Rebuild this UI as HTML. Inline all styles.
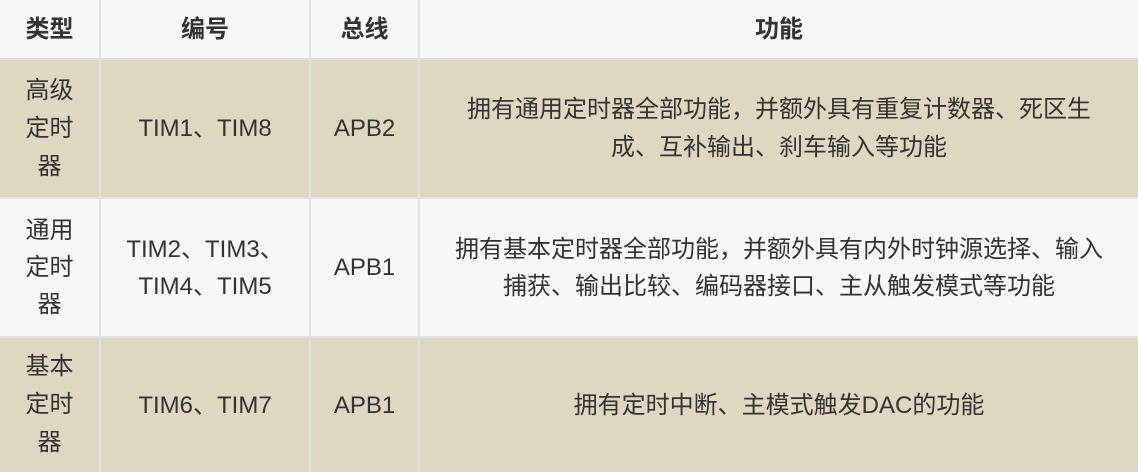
<!DOCTYPE html><html><head><meta charset="utf-8"><style>
body{margin:0;width:1138px;height:472px;background:#dfe2e5;overflow:hidden;font-family:"Liberation Sans","Noto Sans CJK SC",sans-serif;color:#333;font-size:24px}
.c{position:absolute;display:flex;align-items:center;justify-content:center;text-align:center;line-height:37px}
.h{background:#f7f7f8;font-weight:bold}
.w{background:#f7f7f8}
.b{background:#dfd7bf}
</style></head><body>
<div class="c h" style="left:0;top:0;width:99px;height:58px">类型</div>
<div class="c h" style="left:101px;top:0;width:208px;height:58px">编号</div>
<div class="c h" style="left:311px;top:0;width:107px;height:58px">总线</div>
<div class="c h" style="left:420px;top:0;width:718px;height:58px">功能</div>

<div class="c b" style="left:0;top:60px;width:99px;height:137px"><div style="width:50px;line-height:38px">高级定时器</div></div>
<div class="c b" style="left:101px;top:60px;width:208px;height:137px">TIM1、TIM8</div>
<div class="c b" style="left:311px;top:60px;width:107px;height:137px">APB2</div>
<div class="c b" style="left:420px;top:60px;width:718px;height:137px"><div style="width:635px;line-height:38px">拥有通用定时器全部功能，并额外具有重复计数器、死区生成、互补输出、刹车输入等功能</div></div>

<div class="c w" style="left:0;top:199px;width:99px;height:137px"><div style="width:50px;line-height:37px">通用定时器</div></div>
<div class="c w" style="left:101px;top:199px;width:208px;height:137px"><div style="width:178px;line-height:37px">TIM2、TIM3、TIM4、TIM5</div></div>
<div class="c w" style="left:311px;top:199px;width:107px;height:137px">APB1</div>
<div class="c w" style="left:420px;top:199px;width:718px;height:137px"><div style="width:660px;line-height:37px">拥有基本定时器全部功能，并额外具有内外时钟源选择、输入捕获、输出比较、编码器接口、主从触发模式等功能</div></div>

<div class="c b" style="left:0;top:338px;width:99px;height:134px"><div style="width:50px;line-height:38px">基本定时器</div></div>
<div class="c b" style="left:101px;top:338px;width:208px;height:134px">TIM6、TIM7</div>
<div class="c b" style="left:311px;top:338px;width:107px;height:134px">APB1</div>
<div class="c b" style="left:420px;top:338px;width:718px;height:134px">拥有定时中断、主模式触发DAC的功能</div>
</body></html>
